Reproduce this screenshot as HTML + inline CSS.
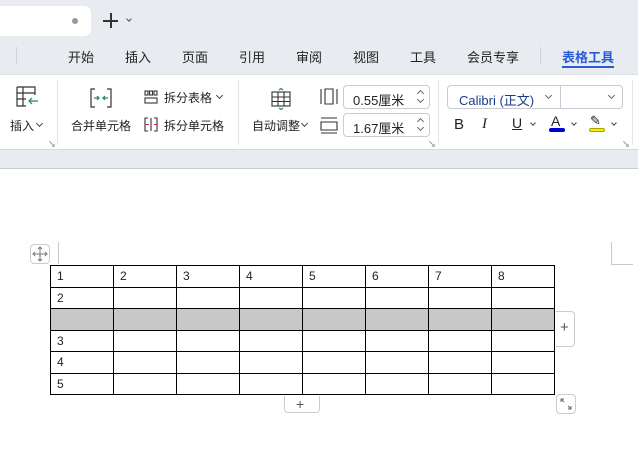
<!DOCTYPE html>
<html><head><meta charset="utf-8"><style>
*{margin:0;padding:0;box-sizing:border-box}
body{width:638px;height:464px;overflow:hidden;background:#fff;font-family:"Liberation Sans","Noto Sans CJK SC",sans-serif;color:#222;position:relative}
.a{position:absolute}
.t{font-size:13px;white-space:nowrap}
.r{font-size:12px}
.cv{position:absolute;width:5px;height:5px;border-right:1.2px solid #444;border-bottom:1.2px solid #444;transform:rotate(45deg)}
.cu{position:absolute;width:5px;height:5px;border-left:1px solid #666;border-top:1px solid #666;transform:rotate(45deg)}
table{border-collapse:collapse;position:absolute;left:50px;top:265px}
td{border:1.3px solid #000;width:63px;height:21.5px;font-size:12px;padding:0 0 0 6px;vertical-align:middle;font-family:"Liberation Sans",sans-serif}
tr.g td{background:#c8c8c8}
.box{border:1px solid #c9ccd2;border-radius:4px;background:#fff}
</style></head><body>
<div class="a" style="left:0;top:0;width:638px;height:74px;background:#e8ebf0"></div>
<div class="a" style="left:-10px;top:6px;width:101px;height:30px;background:#fff;border-radius:7px"></div>
<div class="a" style="left:72px;top:18px;width:6px;height:6px;border-radius:50%;background:#999"></div>
<div class="a" style="left:103px;top:20px;width:15px;height:1.6px;background:#333"></div>
<div class="a" style="left:110px;top:13px;width:1.6px;height:15px;background:#333"></div>
<div class="cv" style="left:127px;top:17px;width:4px;height:4px;border-color:#555"></div>
<div class="a" style="left:16px;top:47px;width:1px;height:17px;background:#cfd2d8"></div>
<div class="a t" style="left:68px;top:47px">开始</div>
<div class="a t" style="left:125px;top:47px">插入</div>
<div class="a t" style="left:182px;top:47px">页面</div>
<div class="a t" style="left:239px;top:47px">引用</div>
<div class="a t" style="left:296px;top:47px">审阅</div>
<div class="a t" style="left:353px;top:47px">视图</div>
<div class="a t" style="left:410px;top:47px">工具</div>
<div class="a t" style="left:467px;top:47px">会员专享</div>
<div class="a" style="left:540px;top:47px;width:1px;height:17px;background:#cfd2d8"></div>
<div class="a t" style="left:562px;top:47px;color:#2a5bd7;font-weight:bold">表格工具</div>
<div class="a" style="left:562px;top:66px;width:52px;height:2px;background:#2a5bd7"></div>
<div class="a" style="left:0;top:74px;width:638px;height:75px;background:#fff;border-top:1px solid #dcdfe4"></div>
<div class="a" style="left:0;top:149px;width:638px;height:20px;background:#e8ebf0;border-bottom:1px solid #c8cbd0;border-top:1px solid #d5d8dd"></div>
<svg class="a" style="left:16px;top:86px" width="24" height="24" viewBox="0 0 24 24" fill="none" stroke="#333" stroke-width="1.2"><path d="M1 1h18v8M1 1v19h9M1 7h18M1 13h9M7 1v19"/><path d="M22 15h-9M16 12l-3 3 3 3" stroke="#1a8a5a"/></svg>
<div class="a t r" style="left:10px;top:117px">插入</div>
<div class="cv" style="left:37px;top:121px"></div>
<div class="a t" style="left:48px;top:139px;font-size:8px;color:#666">↘</div>
<div class="a" style="left:57px;top:80px;width:1px;height:65px;background:#e2e4e8"></div>
<svg class="a" style="left:90px;top:88px" width="22" height="20" viewBox="0 0 22 20" fill="none" stroke="#333" stroke-width="1.2"><path d="M5 1H1v18h4M17 1h4v18h-4"/><path d="M4 10h5M7 8l2 2-2 2M18 10h-5M15 8l-2 2 2 2" stroke="#1a8a5a"/></svg>
<div class="a t r" style="left:71px;top:117px">合并单元格</div>
<svg class="a" style="left:144px;top:90px" width="14" height="14" fill="none" stroke="#333" stroke-width="1.1"><rect x="1" y="1" width="3" height="4"/><rect x="5.5" y="1" width="3" height="4"/><rect x="10" y="1" width="3" height="4"/><rect x="1" y="8" width="12" height="5"/></svg>
<div class="a t r" style="left:164px;top:89px">拆分表格</div>
<div class="cv" style="left:217px;top:93px"></div>
<svg class="a" style="left:144px;top:117px" width="14" height="15" fill="none" stroke="#333" stroke-width="1.1"><path d="M4 1H1v13h3M10 1h3v13h-3M7 1v13"/><path d="M1 7.5h4M10 7.5h4" stroke="#c0304a"/></svg>
<div class="a t r" style="left:164px;top:117px">拆分单元格</div>
<div class="a" style="left:238px;top:80px;width:1px;height:65px;background:#e2e4e8"></div>
<svg class="a" style="left:270px;top:88px" width="22" height="22" fill="none" stroke="#333" stroke-width="1.1"><rect x="2" y="4" width="18" height="14"/><path d="M2 9h18M2 13.5h18M8 4v14M14 4v14"/><path d="M9 2l2-1.5 2 1.5M9 20l2 1.5 2-1.5" stroke="#1a8a5a"/></svg>
<div class="a t r" style="left:252px;top:117px">自动调整</div>
<div class="cv" style="left:302px;top:121px"></div>
<svg class="a" style="left:320px;top:88px" width="18" height="48" fill="none" stroke="#333" stroke-width="1.1"><path d="M1 1v15M17 1v15M5 1v15h8V1z"/><path d="M1 30h16M1 45h16M1 34h16v8H1z"/></svg>
<div class="a box" style="left:343px;top:85px;width:87px;height:24px"></div>
<div class="a t" style="left:353px;top:90px">0.55厘米</div>
<div class="cu" style="left:418px;top:91px"></div><div class="cv" style="left:418px;top:97px;border-color:#666;border-width:1px"></div>
<div class="a box" style="left:343px;top:113px;width:87px;height:24px"></div>
<div class="a t" style="left:353px;top:118px">1.67厘米</div>
<div class="cu" style="left:418px;top:119px"></div><div class="cv" style="left:418px;top:125px;border-color:#666;border-width:1px"></div>
<div class="a t" style="left:428px;top:139px;font-size:8px;color:#666">↘</div>
<div class="a" style="left:438px;top:80px;width:1px;height:65px;background:#e2e4e8"></div>
<div class="a box" style="left:447px;top:85px;width:176px;height:24px"></div>
<div class="a" style="left:560px;top:85px;width:1px;height:24px;background:#c9ccd2"></div>
<div class="a t" style="left:459px;top:90px;color:#1d3b8a">Calibri (正文)</div>
<div class="cv" style="left:546px;top:93px;border-color:#666;border-width:1px"></div>
<div class="cv" style="left:609px;top:93px;border-color:#666;border-width:1px"></div>
<div class="a t" style="left:454px;top:116px;font-size:15px">B</div>
<div class="a t" style="left:482px;top:116px;font-size:15px;font-style:italic;font-family:'Liberation Serif',serif">I</div>
<div class="a t" style="left:512px;top:115px;font-size:14px;text-decoration:underline">U</div>
<div class="cv" style="left:531px;top:121px;width:4px;height:4px"></div>
<div class="a t" style="left:551px;top:113px;font-size:14px">A</div>
<div class="a" style="left:549px;top:128px;width:16px;height:4px;background:#0000d0;border-radius:2px"></div>
<div class="cv" style="left:572px;top:121px;width:4px;height:4px"></div>
<div class="a t" style="left:590px;top:113px;font-size:13px">✎</div>
<div class="a" style="left:589px;top:128px;width:16px;height:4px;background:#f0f000;border:1px solid #b0a000;border-radius:2px"></div>
<div class="cv" style="left:612px;top:121px;width:4px;height:4px"></div>
<div class="a t" style="left:622px;top:139px;font-size:8px;color:#666">↘</div>
<div class="a" style="left:632px;top:80px;width:1px;height:65px;background:#e2e4e8"></div>
<div class="a" style="left:58px;top:242px;width:1px;height:22px;background:#c8c8c8"></div>
<div class="a" style="left:611px;top:242px;width:1px;height:22px;background:#c8c8c8"></div>
<div class="a" style="left:611px;top:264px;width:22px;height:1px;background:#c8c8c8"></div>
<div class="a box" style="left:30px;top:244px;width:20px;height:20px"></div>
<svg class="a" style="left:32px;top:246px" width="16" height="16" fill="none" stroke="#777" stroke-width="1"><path d="M8 1v14M1 8h14M6 3l2-2 2 2M6 13l2 2 2-2M3 6L1 8l2 2M13 6l2 2-2 2"/></svg>
<table>
<tr><td>1</td><td>2</td><td>3</td><td>4</td><td>5</td><td>6</td><td>7</td><td>8</td></tr>
<tr><td>2</td><td></td><td></td><td></td><td></td><td></td><td></td><td></td></tr>
<tr class="g"><td></td><td></td><td></td><td></td><td></td><td></td><td></td><td></td></tr>
<tr><td>3</td><td></td><td></td><td></td><td></td><td></td><td></td><td></td></tr>
<tr><td>4</td><td></td><td></td><td></td><td></td><td></td><td></td><td></td></tr>
<tr><td>5</td><td></td><td></td><td></td><td></td><td></td><td></td><td></td></tr>
</table>
<div class="a box" style="left:556px;top:311px;width:19px;height:36px;border-left:none;border-radius:0 4px 4px 0"></div>
<div class="a t" style="left:560px;top:319px;font-size:15px;color:#555">+</div>
<div class="a box" style="left:284px;top:396px;width:36px;height:17px;border-top:none;border-radius:0 0 4px 4px"></div>
<div class="a t" style="left:296px;top:396px;font-size:14px;color:#555">+</div>
<div class="a box" style="left:556px;top:394px;width:20px;height:20px"></div>
<svg class="a" style="left:559px;top:397px" width="14" height="14" fill="none" stroke="#666" stroke-width="1"><path d="M2 2l3 3M2 2h3M2 2v3M12 12l-3-3M12 12H9M12 12V9"/></svg>
</body></html>
